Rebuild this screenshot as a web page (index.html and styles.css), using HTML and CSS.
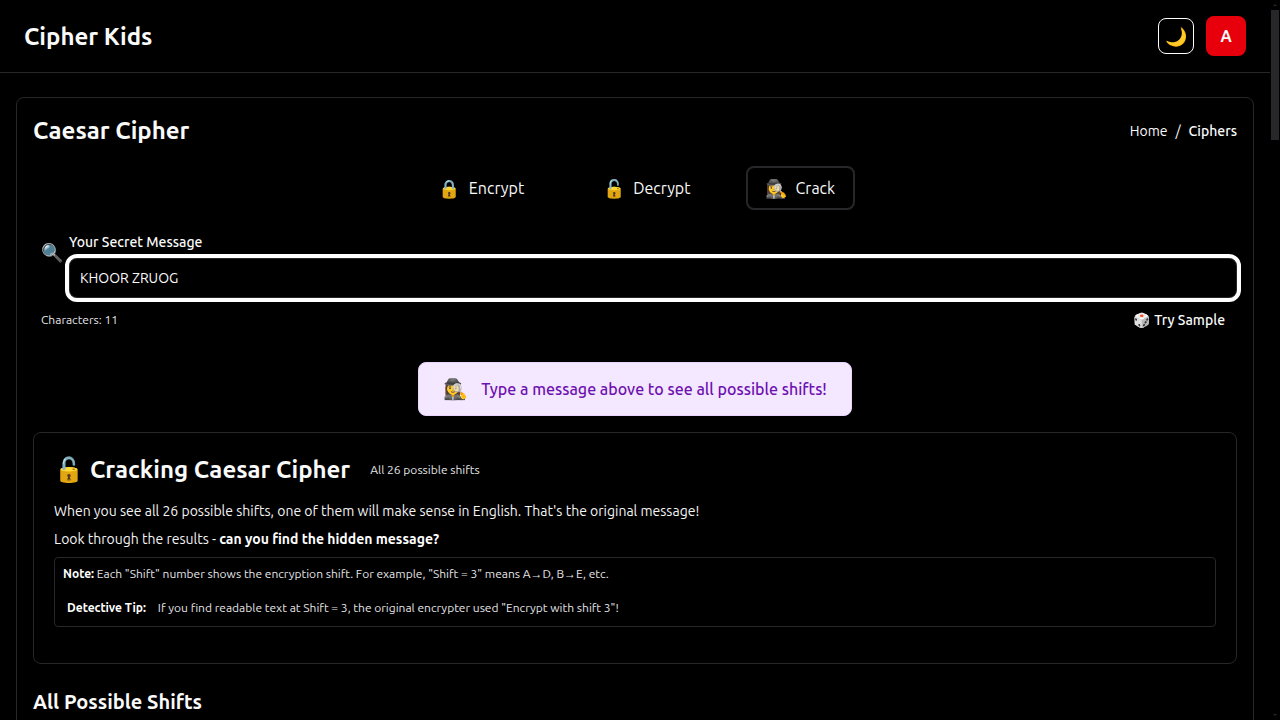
FILE: index.html
```html
<!DOCTYPE html>
<html lang="en">
<head>
<meta charset="utf-8">
<meta name="viewport" content="width=device-width, initial-scale=1">
<title>Cipher Kids</title>
<link rel="stylesheet" href="styles.css">
</head>
<body>
<div class="page">
  <header class="topbar">
    <span class="brand">Cipher Kids</span>
    <div class="topbar-actions">
      <button class="theme-button" type="button" aria-label="Toggle theme">🌙</button>
      <button class="avatar" type="button">A</button>
    </div>
  </header>
  <main class="panel">
    <div class="panel-head">
      <h1 class="title">Caesar Cipher</h1>
      <nav class="crumbs" aria-label="Breadcrumb">
        <a class="crumb" href="#">Home</a><span>/</span><a class="crumb current" href="#">Ciphers</a>
      </nav>
    </div>
    <div class="tabs">
      <button class="tab" type="button"><span class="tab-icon">🔒</span>Encrypt</button>
      <button class="tab" type="button"><span class="tab-icon">🔓</span>Decrypt</button>
      <button class="tab active" type="button"><span class="tab-icon">🕵️‍♀️</span>Crack</button>
    </div>
    <div class="message">
      <span class="message-icon">🔍</span>
      <div class="field">
        <label class="field-label" for="secret">Your Secret Message</label>
        <input class="field-input" id="secret" type="text" value="KHOOR ZRUOG">
      </div>
    </div>
    <div class="message-foot">
      <span class="count">Characters: 11</span>
      <button class="sample" type="button">🎲 Try Sample</button>
    </div>
    <div class="hint"><span class="hint-icon">🕵️‍♀️</span><span>Type a message above to see all possible shifts!</span></div>
    <section class="info">
      <div class="info-head">
        <span class="info-icon">🔓</span>
        <h2 class="title">Cracking Caesar Cipher</h2>
        <span class="info-sub">All 26 possible shifts</span>
      </div>
      <p class="info-text">When you see all 26 possible shifts, one of them will make sense in English. That's the original message!</p>
      <p class="info-text">Look through the results - <strong>can you find the hidden message?</strong></p>
      <div class="note">
        <p class="note-line"><strong>Note:</strong> Each "Shift" number shows the encryption shift. For example, "Shift = 3" means A→D, B→E, etc.</p>
        <p class="note-line tip"><strong>Detective Tip:</strong><span>If you find readable text at Shift = 3, the original encrypter used "Encrypt with shift 3"!</span></p>
      </div>
    </section>
    <h2 class="subtitle">All Possible Shifts</h2>
  </main>
</div>
<div class="scrollbar" aria-hidden="true">
  <span class="arrow-up"></span><span class="thumb"></span><span class="arrow-down"></span>
</div>
</body>
</html>
```
FILE: styles.css
```css
* { box-sizing: border-box; }
body {
  margin: 0;
  background: #000;
  color: #fafafa;
  font-family: Ubuntu, "Open Sans", "Noto Sans", "Noto Color Emoji", sans-serif;
  font-size: 14px;
  line-height: 20px;
}
button, input { font: inherit; color: inherit; background: none; border: 0; padding: 0; margin: 0; }
h1, h2, p { margin: 0; }
a { color: inherit; text-decoration: none; }
strong { font-weight: 600; color: #fff; }
.page { height: 100vh; overflow: hidden; padding-right: 10px; }
.topbar {
  display: flex; align-items: center; justify-content: space-between;
  padding: 16px 24px; border-bottom: 1px solid #27272a;
}
.brand, .title { font-size: 24px; line-height: 33px; font-weight: 600; }
.topbar-actions { display: flex; align-items: center; gap: 12px; }
.theme-button {
  width: 36px; height: 36px; border: 1px solid #fff; border-radius: 8px;
  font-size: 18px; line-height: 28px; padding-left: 2px;
}
.avatar { width: 40px; height: 40px; border-radius: 8px; background: #e7000b; font-size: 16px; font-weight: 600; }
.panel {
  margin: 24px 16px; padding: 16px 16px 240px;
  border: 1px solid #27272a; border-radius: 8px;
}
.panel-head { display: flex; align-items: center; justify-content: space-between; }
.crumbs { display: flex; gap: 8px; }
.current { font-weight: 500; }
.tabs { display: flex; justify-content: center; gap: 31px; margin-top: 19px; }
.tab {
  display: flex; align-items: center; gap: 8px; height: 44px; padding: 0 24px;
  border-radius: 8px; font-size: 16px; line-height: 24px;
}
.tab.active { padding: 0 18px; border: 2px solid #27272a; }
.tab-icon { width: 22px; font-size: 18px; text-align: center; }
.message { display: flex; margin-top: 22px; padding-left: 8px; }
.message-icon { width: 28px; padding-top: 10px; font-size: 18px; }
.field { flex: 1; display: flex; flex-direction: column; gap: 6px; }
.field-label { font-weight: 500; }
.field-input {
  width: 100%; height: 40px; padding: 0 10px;
  border: 1px solid #27272a; border-radius: 8px; outline: 4px solid #fff;
}
.message-foot { display: flex; align-items: center; justify-content: space-between; padding: 12px 12px 0 8px; }
.count { font-size: 12px; color: #e4e4e7; }
.sample { font-weight: 500; }
.hint {
  display: flex; align-items: center; gap: 10px; width: fit-content;
  margin: 32px auto 16px; padding: 14px 24px; border: 1px solid #e9d4ff; border-radius: 8px;
  background: #f3e8ff; color: #6e11b0; font-size: 16px; line-height: 24px; font-weight: 500;
}
.hint-icon { width: 28px; font-size: 20px; }
.info { padding: 20px 20px 36px; border: 1px solid #27272a; border-radius: 8px; }
.info-head { display: flex; align-items: center; margin-bottom: 15px; }
.info-icon { width: 36px; font-size: 24px; line-height: 33px; }
.info-sub { margin-left: 20px; font-size: 12px; color: #e4e4e7; }
.info-text { margin-bottom: 8px; color: #f4f4f5; }
.note { padding: 6px 8px 8px; border: 1px solid #27272a; border-radius: 4px; font-size: 12px; color: #e4e4e7; }
.note-line.tip { display: flex; gap: 12px; margin-top: 14px; padding-left: 4px; }
.subtitle { margin-top: 24px; font-size: 20px; line-height: 28px; font-weight: 600; }
.scrollbar {
  position: fixed; top: 0; right: 0; bottom: 0; width: 10px; padding: 4px 1px;
  display: flex; flex-direction: column; align-items: center; background: #000;
}
.arrow-up { border: 2px solid transparent; border-top: 0; border-bottom: 2px solid #27272a; }
.thumb { width: 8px; height: 130px; margin-top: 4px; background: #27272a; }
.arrow-down { margin-top: auto; border: 2px solid transparent; border-bottom: 0; border-top: 2px solid #27272a; }
```
